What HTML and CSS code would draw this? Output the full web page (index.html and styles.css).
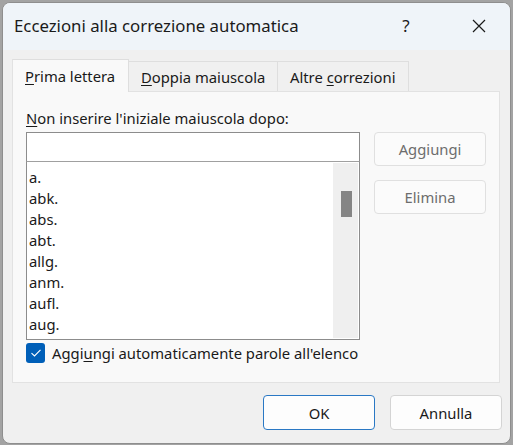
FILE: index.html
```html
<!DOCTYPE html>
<html lang="it">
<head>
<meta charset="utf-8">
<title>Eccezioni alla correzione automatica</title>
<link rel="stylesheet" href="styles.css">
</head>
<body>
<div class="dialog">
  <div class="titlebar">
    <span class="title">Eccezioni alla correzione automatica</span>
    <span class="help">?</span>
    <span class="close">
      <svg width="14" height="14" viewBox="0 0 14 14"><path d="M1 1 L13 13 M13 1 L1 13" stroke="#1a1a1a" stroke-width="1.2" fill="none"/></svg>
    </span>
  </div>
  <div class="content">
    <div class="tabs">
      <div class="tab active"><span><u>P</u>rima lettera</span></div>
      <div class="tab"><span><u>D</u>oppia maiuscola</span></div>
      <div class="tab"><span>Altre <u>c</u>orrezioni</span></div>
    </div>
    <div class="panel">
      <div class="label"><u>N</u>on inserire l'iniziale maiuscola dopo:</div>
      <div class="row">
        <div class="leftcol">
          <div class="input"></div>
          <div class="list">
            <div class="items">
              <div class="item">a.</div>
              <div class="item">abk.</div>
              <div class="item">abs.</div>
              <div class="item">abt.</div>
              <div class="item">allg.</div>
              <div class="item">anm.</div>
              <div class="item">aufl.</div>
              <div class="item">aug.</div>
            </div>
            <div class="scrollbar"><div class="thumb"></div></div>
          </div>
        </div>
        <div class="rightcol">
          <div class="btn disabled">Aggiungi</div>
          <div class="btn disabled">Elimina</div>
        </div>
      </div>
      <div class="check">
        <span class="box">
          <svg width="12" height="10" viewBox="0 0 12 10"><path d="M1.5 5.2 L4.5 8 L10.5 1.8" stroke="#fff" stroke-width="1.1" fill="none"/></svg>
        </span>
        <span>Aggi<u>u</u>ngi automaticamente parole all'elenco</span>
      </div>
    </div>
    <div class="footer">
      <div class="btn default">OK</div>
      <div class="btn">Annulla</div>
    </div>
  </div>
</div>
</body>
</html>
```
FILE: styles.css
```css
html, body {
  margin: 0;
  padding: 0;
}
body {
  width: 513px;
  height: 445px;
  background: #a3a3a3;
  font-family: "Noto Sans", "Open Sans", sans-serif;
  color: #1a1a1a;
  overflow: hidden;
}
u {
  text-decoration-thickness: 1px;
  text-underline-offset: 2px;
}
.dialog {
  margin: 2px 0 0 2px;
  width: 507px;
  height: 440px;
  border: 1px solid #8e8e8e;
  border-radius: 8px;
  background: #f0f0f0;
  overflow: hidden;
  display: flex;
  flex-direction: column;
}
.titlebar {
  height: 47px;
  background: #eff4f9;
  display: flex;
  align-items: center;
  padding-bottom: 2px;
  box-sizing: border-box;
}
.title {
  margin-left: 11px;
  font-size: 16.8px;
  flex: 1;
}
.help {
  font-size: 17px;
  width: 20px;
  text-align: center;
  margin-right: 56px;
}
.close {
  display: flex;
  margin-right: 24px;
}
.content {
  padding: 8px 8px 0 9px;
  display: flex;
  flex-direction: column;
}
.tabs {
  display: flex;
  align-items: flex-end;
  height: 33px;
  position: relative;
  z-index: 1;
}
.tab {
  height: 30px;
  box-sizing: border-box;
  border: 1px solid #dedede;
  border-left: none;
  border-bottom: none;
  background: #f0f0f0;
  font-size: 14.8px;
  display: flex;
  align-items: center;
  padding: 0 12px;
  white-space: nowrap;
}
.tab.active {
  height: 33px;
  border-left: 1px solid #e2e2e2;
  background: #f9f9f9;
  width: 117px;
  padding-left: 12px;
  margin-bottom: -1px;
  padding-bottom: 1px;
}
.tab:nth-child(2) { width: 149px; }
.tab:nth-child(3) { width: 131px; }
.panel {
  width: 488px;
  height: 292px;
  box-sizing: border-box;
  background: #f9f9f9;
  border: 1px solid #e2e2e2;
  padding: 14px 13px 0 13px;
}
.label {
  font-size: 14.8px;
  height: 26px;
  line-height: 24px;
}
.row {
  display: flex;
  gap: 14px;
}
.leftcol {
  width: 335px;
}
.input {
  height: 30px;
  box-sizing: border-box;
  background: #fff;
  border: 1px solid #8c8c8c;
  border-bottom: 1px solid #a0a0a0;
}
.list {
  height: 178px;
  box-sizing: border-box;
  background: #fff;
  border: 1px solid #8c8c8c;
  border-top: none;
  display: flex;
  padding: 1px 1px 1px 0;
}
.items {
  flex: 1;
  padding: 4px 0 0 2px;
  font-size: 14.8px;
}
.item {
  height: 21px;
  line-height: 20px;
}
.scrollbar {
  width: 25px;
  background: #efefef;
  padding-top: 28px;
  display: flex;
  justify-content: center;
}
.thumb {
  width: 11px;
  height: 26px;
  background: #858585;
  margin-left: 1px;
}
.rightcol {
  display: flex;
  flex-direction: column;
  gap: 14px;
}
.btn {
  width: 112px;
  height: 34px;
  box-sizing: border-box;
  border: 1px solid #d4d4d4;
  border-radius: 4px;
  background: #fdfdfd;
  font-size: 14.8px;
  display: flex;
  align-items: center;
  justify-content: center;
}
.btn.disabled {
  color: #6d6d6d;
  border-color: #e0e0e0;
  background: #fbfbfb;
}
.check {
  display: flex;
  align-items: center;
  gap: 7px;
  margin-top: 3px;
  font-size: 14.8px;
  height: 20px;
}
.box {
  width: 19px;
  height: 20px;
  background: #005fb8;
  border-radius: 3px;
  display: flex;
  align-items: center;
  justify-content: center;
}
.footer {
  display: flex;
  justify-content: flex-end;
  gap: 15px;
  margin-top: 12px;
}
.footer .btn {
  height: 35px;
}
.btn.default {
  border-color: #2a78c4;
}
```
